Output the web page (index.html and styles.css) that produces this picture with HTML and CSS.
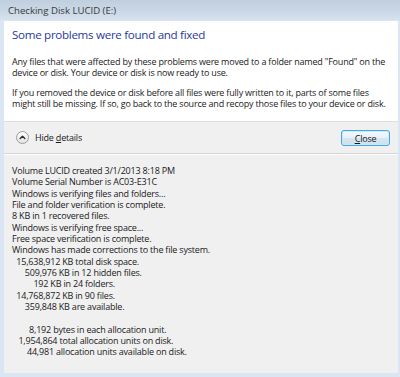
FILE: index.html
```html
<!DOCTYPE html>
<html lang="en">
<head>
  <meta charset="UTF-8" />
  <title>Checking Disk LUCID (E:)</title>
  <link rel="stylesheet" href="styles.css">
</head>
<body>
  <div class="titlebar">Checking Disk LUCID (E:)</div>
  <div class="client">
    <div class="main-panel">
      <div class="main-title">Some problems were found and fixed</div>
      <p class="msg">Any files that were affected by these problems were moved to a folder named "Found" on the device or disk. Your device or disk is now ready to use.</p>
      <p class="msg">If you removed the device or disk before all files were fully written to it, parts of some files might still be missing. If so, go back to the source and recopy those files to your device or disk.</p>
    </div>
    <div class="footer">
      <div class="details-toggle">
        <span class="chevron-btn">
          <svg width="13" height="13" viewBox="0 0 13 13">
            <defs>
              <linearGradient id="chev" x1="0" y1="0" x2="0" y2="1">
                <stop offset="0" stop-color="#ffffff"/>
                <stop offset="1" stop-color="#e2e2e2"/>
              </linearGradient>
            </defs>
            <circle cx="6.5" cy="6.5" r="6" fill="url(#chev)" stroke="#9c9c9c" stroke-width="1"/>
            <path d="M4.2 7.6L6.5 5.3L8.8 7.6" fill="none" stroke="#2b2b2b" stroke-width="1.4" stroke-linecap="round" stroke-linejoin="round"/>
          </svg>
        </span>
        <span class="toggle-label">Hide <u>d</u>etails</span>
      </div>
      <button class="close-btn"><u>C</u>lose</button>
    </div>
    <div class="details">Volume LUCID created 3/1/2013 8:18 PM
Volume Serial Number is AC03-E31C
Windows is verifying files and folders...
File and folder verification is complete.
8 KB in 1 recovered files.
Windows is verifying free space...
Free space verification is complete.
Windows has made corrections to the file system.
  15,638,912 KB total disk space.
      509,976 KB in 12 hidden files.
          192 KB in 24 folders.
  14,768,872 KB in 90 files.
      359,848 KB are available.

        8,192 bytes in each allocation unit.
   1,954,864 total allocation units on disk.
       44,981 allocation units available on disk.</div>
  </div>
</body>
</html>
```

FILE: styles.css
```css
html, body {
  box-sizing: border-box;
}
body {
  margin: 0;
  width: 400px;
  height: 377px;
  overflow: hidden;
  background: #dae6f3;
  font-family: 'Open Sans', 'Noto Sans', Arial, sans-serif;
  font-size: 9px;
  letter-spacing: -0.2px;
  color: #1a1a1a;
}
.titlebar {
  height: 20px;
  padding: 2px 0 0 8px;
  box-sizing: border-box;
  line-height: 18px;
  font-size: 9.6px;
  letter-spacing: 0;
  color: #3a3a3a;
  background: linear-gradient(180deg, #c0cfde 0%, #cbd8e6 60%, #d6e2ee 100%);
}
.client {
  margin: 1px 2px 0 4px;
  height: 352px;
  display: flex;
  flex-direction: column;
  background: #f0f0f0;
}
/* white message area */
.main-panel {
  background: #fff;
  height: 101px;
  box-sizing: border-box;
  padding: 6px 8px 0 8px;
  border-bottom: 1px solid #dfdfdf;
}
.main-title {
  font-size: 11.6px;
  letter-spacing: -0.3px;
  line-height: 16px;
  color: #1f3a9a;
  margin-bottom: 13px;
}
.msg {
  margin: 0 0 8px 0;
  line-height: 11.33px;
}
/* command row */
.footer {
  height: 32px;
  box-sizing: border-box;
  display: flex;
  align-items: center;
  justify-content: space-between;
  padding: 0 8px 0 8px;
  border-bottom: 1px solid #d5d5d5;
  box-shadow: 0 1px 0 #fff;
}
.details-toggle {
  display: flex;
  align-items: center;
  gap: 6px;
  padding-left: 4px;
  margin-top: -1px;
}
.chevron-btn svg {
  display: block;
}
.toggle-label {
  color: #1a1a1a;
}
.close-btn {
  width: 49px;
  height: 16px;
  padding: 0;
  font-family: inherit;
  font-size: 9px;
  letter-spacing: -0.2px;
  color: #1a1a1a;
  border: 1px solid #4ea6dc;
  border-radius: 3px;
  background: linear-gradient(180deg, #f4f9fc 0%, #e8f1f8 50%, #d6e6f1 51%, #cfe1ee 100%);
  box-shadow: inset 0 0 0 1px #c4ecfb;
  margin-top: 1px;
}
/* chkdsk output */
.details {
  flex: 1;
  padding: 10px 8px 0 8px;
  margin-top: 1px;
  white-space: pre;
  line-height: 11.33px;
}
```
